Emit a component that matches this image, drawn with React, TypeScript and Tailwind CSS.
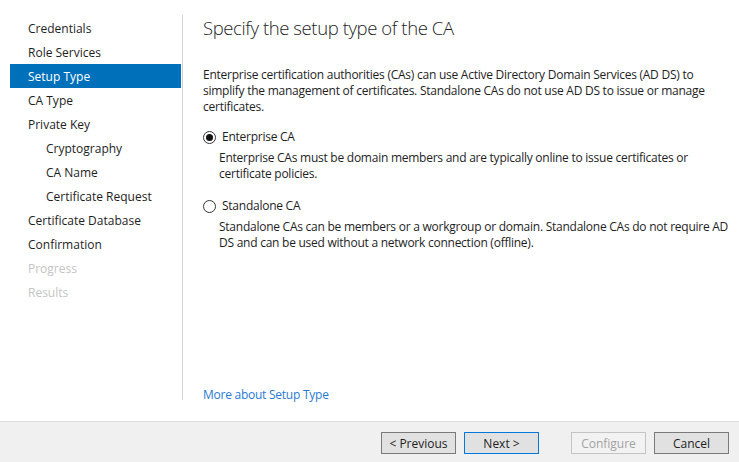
import React, { useState } from 'react';

const steps = [
  { label: 'Credentials', sub: false, state: 'done' },
  { label: 'Role Services', sub: false, state: 'done' },
  { label: 'Setup Type', sub: false, state: 'active' },
  { label: 'CA Type', sub: false, state: 'done' },
  { label: 'Private Key', sub: false, state: 'done' },
  { label: 'Cryptography', sub: true, state: 'done' },
  { label: 'CA Name', sub: true, state: 'done' },
  { label: 'Certificate Request', sub: true, state: 'done' },
  { label: 'Certificate Database', sub: false, state: 'done' },
  { label: 'Confirmation', sub: false, state: 'done' },
  { label: 'Progress', sub: false, state: 'disabled' },
  { label: 'Results', sub: false, state: 'disabled' },
];

const Radio: React.FC<{ checked: boolean }> = ({ checked }) => (
  <span className="w-[13px] h-[13px] rounded-full border border-[#333333] bg-white flex items-center justify-center shrink-0">
    {checked && <span className="w-[7px] h-[7px] rounded-full bg-[#111111]" />}
  </span>
);

const App: React.FC = () => {
  const [setupType, setSetupType] = useState('enterprise');

  const getStepClass = (state: string) => {
    if (state === 'active') return 'bg-[#0070bb] text-white';
    if (state === 'disabled') return 'text-[#c4c4c4]';
    return 'text-[#1e1e1e]';
  };

  return (
    <div className="w-[739px] h-[462px] flex flex-col bg-white font-['Open_Sans',sans-serif] text-[12px] text-[#1e1e1e] overflow-hidden">
      <div className="flex flex-1">
        <div className="pl-[10px] pt-[16px] w-[181px] shrink-0">
          {steps.map((step) => (
            <div
              key={step.label}
              className={`h-[24px] flex items-center pt-[2px] ${step.sub ? 'pl-[36px]' : 'pl-[18px]'} ${getStepClass(step.state)}`}
            >
              {step.label}
            </div>
          ))}
        </div>
        <div className="w-px bg-[#d2d2d2] mt-[15px] h-[385px] ml-[1px] shrink-0" />

        <div className="flex flex-col flex-1 pl-[20px] pr-[8px]">
          <h1 className="font-light text-[18.5px] leading-[26px] mt-[15px] text-[#1e1e1e] tracking-[-0.4px]">
            Specify the setup type of the CA
          </h1>

          <p className="mt-[26px] leading-[16px] tracking-[-0.25px] pr-[12px]">
            Enterprise certification authorities (CAs) can use Active Directory Domain Services (AD DS) to
            simplify the management of certificates. Standalone CAs do not use AD DS to issue or manage
            certificates.
          </p>

          <div className="mt-[14px] tracking-[-0.25px]">
            <label className="flex items-center gap-[6px] h-[16px] cursor-default" onClick={() => setSetupType('enterprise')}>
              <Radio checked={setupType === 'enterprise'} />
              <span>Enterprise CA</span>
            </label>
            <p className="pl-[16px] mt-[5px] leading-[16px] pr-[12px]">
              Enterprise CAs must be domain members and are typically online to issue certificates or
              certificate policies.
            </p>
          </div>

          <div className="mt-[16px] tracking-[-0.25px]">
            <label className="flex items-center gap-[6px] h-[16px] cursor-default" onClick={() => setSetupType('standalone')}>
              <Radio checked={setupType === 'standalone'} />
              <span>Standalone CA</span>
            </label>
            <p className="pl-[16px] mt-[5px] leading-[16px]">
              Standalone CAs can be members or a workgroup or domain. Standalone CAs do not require AD
              DS and can be used without a network connection (offline).
            </p>
          </div>

          <a href="#" className="mt-auto mb-[18px] text-[#2a7ad3] leading-[16px] tracking-[-0.25px] self-start">
            More about Setup Type
          </a>
        </div>
      </div>

      <div className="h-[41px] border-t border-[#dcdcdc] bg-[#f0f0f0] flex justify-end items-start pt-[10px] pr-[10px] shrink-0">
        <button className="w-[75px] h-[22px] pt-px bg-[#e1e1e1] border border-[#7a7a7a] text-[#1e1e1e] text-[12px] leading-none">
          &lt; Previous
        </button>
        <button className="w-[75px] h-[22px] pt-px ml-[8px] bg-[#e1e1e1] border border-[#0078d7] text-[#1e1e1e] text-[12px] leading-none">
          Next &gt;
        </button>
        <button disabled className="w-[75px] h-[22px] pt-px ml-[32px] bg-[#f2f2f2] border border-[#c4c4c4] text-[#a3a3a3] text-[12px] leading-none">
          Configure
        </button>
        <button className="w-[75px] h-[22px] pt-px ml-[8px] bg-[#e1e1e1] border border-[#7a7a7a] text-[#1e1e1e] text-[12px] leading-none">
          Cancel
        </button>
      </div>
    </div>
  );
};

export default App;
